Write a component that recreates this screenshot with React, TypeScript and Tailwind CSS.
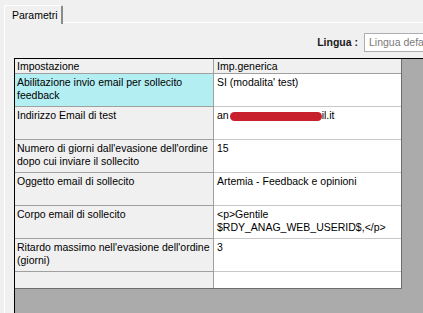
import React from "react";

const rows: { k: string; v: React.ReactNode; sel?: boolean }[] = [
  { k: "Abilitazione invio email per sollecito feedback", v: "SI (modalita' test)", sel: true },
  {
    k: "Indirizzo Email di test",
    v: (
      <span className="inline-flex items-center">
        an
        <span className="inline-block w-[92px] h-[9px] rounded-full bg-[#c8202c] ml-[1px] mt-[1px]" />
        il.it
      </span>
    ),
  },
  { k: "Numero di giorni dall'evasione dell'ordine dopo cui inviare il sollecito", v: "15" },
  { k: "Oggetto email di sollecito", v: "Artemia - Feedback e opinioni" },
  {
    k: "Corpo email di sollecito",
    v: (
      <>
        {"<p>Gentile"}
        <br />
        {"$RDY_ANAG_WEB_USERID$,</p>"}
      </>
    ),
  },
  { k: "Ritardo massimo nell'evasione dell'ordine (giorni)", v: "3" },
];

export default function App() {
  return (
    <div
      className="w-[423px] h-[313px] bg-[#f0f0f0] overflow-hidden flex flex-col text-[10.5px] leading-[13px] text-black"
      style={{ fontFamily: '"Liberation Sans", Arial, sans-serif' }}
    >
      {/* tab strip */}
      <div className="h-[23px] flex items-end pl-[4px] shrink-0">
        <div className="h-[19px] w-[59px] border-l border-t border-white border-r-2 border-r-[#8a8a8a] rounded-tr-[2px] flex items-center pl-[7px] bg-[#f0f0f0] relative top-[1px]">
          Parametri
        </div>
        <div className="flex-1 h-[1px] bg-white" />
      </div>
      {/* tab page */}
      <div className="flex-1 flex flex-col ml-[4px] border-l border-white min-h-0">
        <div className="h-[35px] shrink-0 flex items-center justify-end">
          <span className="font-bold text-[#1a1a1a] mr-[6px] mt-[3px]">Lingua :</span>
          <div className="w-[59px] h-[19px] mt-[3px] border border-r-0 border-[#abadb3] bg-white flex items-center pl-[4px] text-[#7a7a7a] whitespace-nowrap overflow-hidden">
            Lingua default
          </div>
        </div>
        <div className="flex-1 ml-[9px] border-l border-t border-black bg-[#ababab] min-h-0">
          <div className="w-[387px] border-r border-b border-[#6e6e6e]">
            <div className="flex h-[15px] border-b border-[#a0a0a0] bg-[#f0f0f0]">
              <div className="w-[199px] border-r border-[#a0a0a0] pl-[2px] pt-[1px]">Impostazione</div>
              <div className="flex-1 pl-[3px] pt-[1px]">Imp.generica</div>
            </div>
            {rows.map((r, i) => (
              <div key={i} className="flex h-[33px]">
                <div
                  className={
                    "w-[199px] border-r border-b border-[#a0a0a0] pl-[2px] pr-[2px] pt-[2px] " +
                    (r.sel ? "bg-[#b3eef2]" : "bg-[#f0f0f0]")
                  }
                >
                  {r.k}
                </div>
                <div className="flex-1 bg-white border-b border-[#c8c8c8] pl-[3px] pt-[2px]">{r.v}</div>
              </div>
            ))}
            <div className="flex h-[16px]">
              <div className="w-[199px] border-r border-[#a0a0a0] bg-[#f0f0f0]" />
              <div className="flex-1 bg-white" />
            </div>
          </div>
        </div>
      </div>
    </div>
  );
}
